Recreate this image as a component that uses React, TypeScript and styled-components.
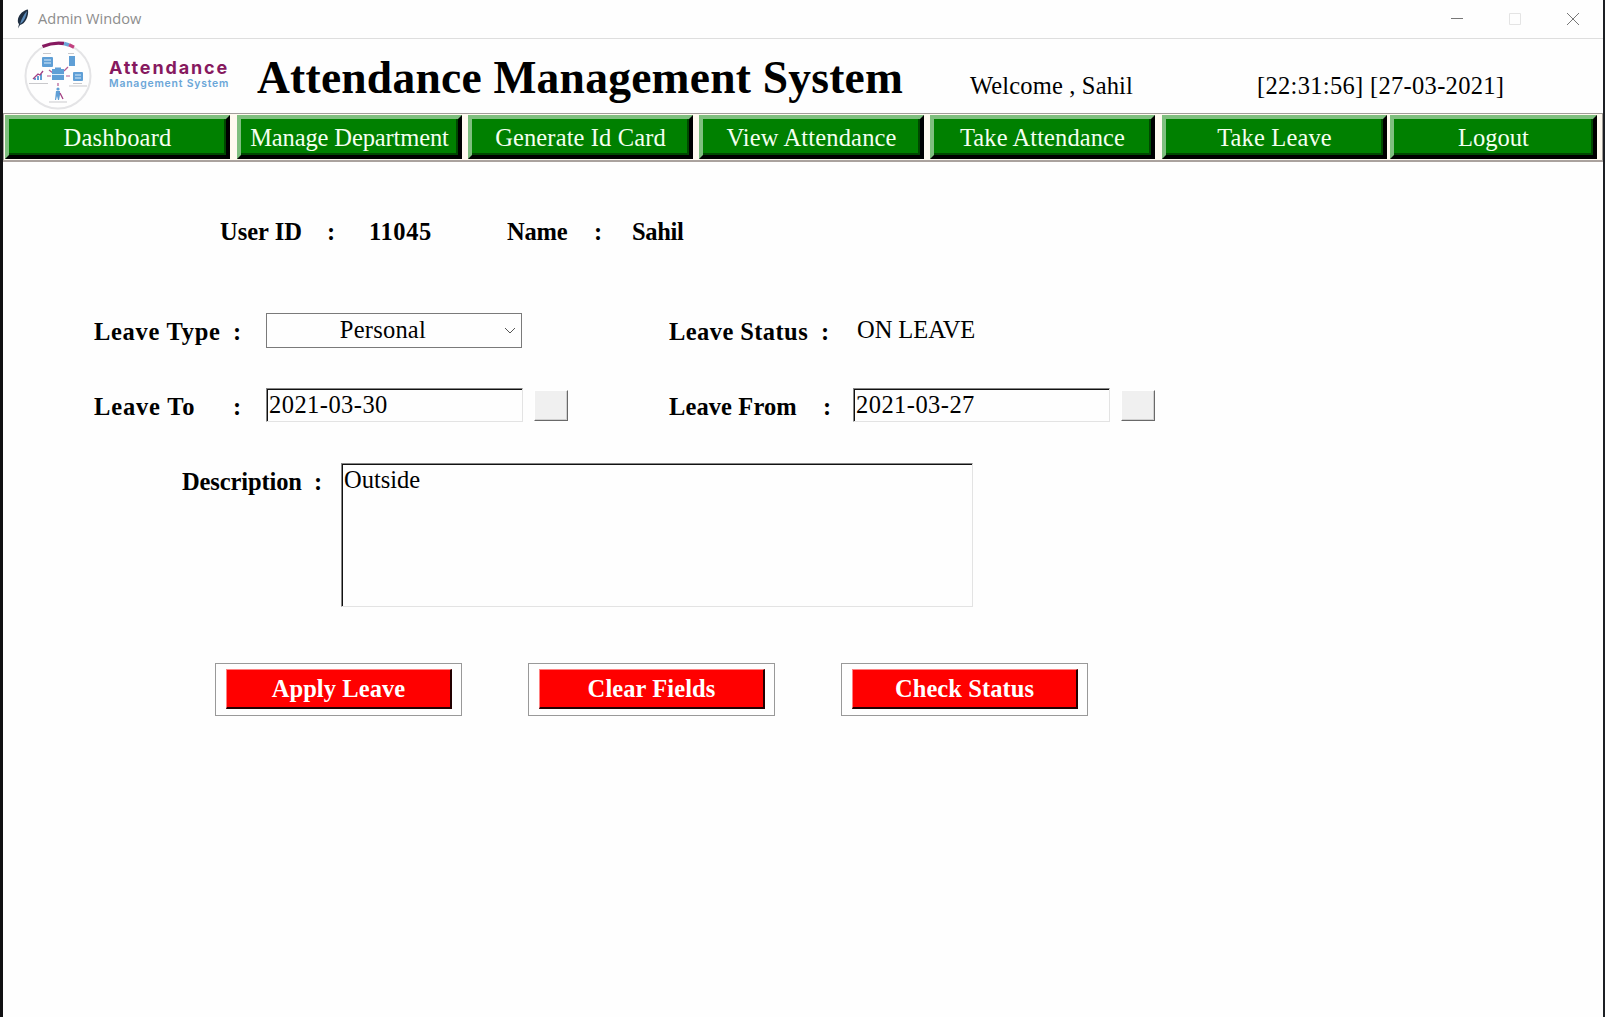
import React from "react";
import styled, { createGlobalStyle } from "styled-components";

const Global = createGlobalStyle`
  *{box-sizing:border-box}
  body{margin:0;background:#fefefe;overflow:hidden;font-family:"Liberation Serif","Times New Roman",serif;color:#000}
`;
const Window = styled.div`
  width:1605px;height:1017px;background:#fefefe;
  border-left:3px solid #101012;border-right:2px solid #1c1f24;
  display:flex;flex-direction:column;
`;
const TitleBar = styled.header`
  height:39px;flex:none;display:flex;align-items:center;padding-left:13px;
  border-bottom:1px solid #dedede;font:14.6px "Open Sans",sans-serif;color:#8d8d8d;
`;
const Caption = styled.div`margin:-2px 0 0 8px;flex:1;`;
const Controls = styled.div`display:flex;gap:44px;margin-right:23px;`;
const Header = styled.div`height:74px;flex:none;display:flex;align-items:flex-start;white-space:nowrap;`;
const Emblem = styled.svg`width:70px;height:70px;margin:2px 0 0 20px;`;
const Brand = styled.div`
  width:146px;margin:18px 0 0 16px;font-family:Inter,sans-serif;
`;
const BrandTop = styled.div`font-size:18px;line-height:22px;font-weight:700;letter-spacing:1.85px;color:#86195f;`;
const BrandSub = styled.div`font-size:10.4px;line-height:10px;font-weight:600;letter-spacing:.82px;color:#6ba6d8;`;
const Title = styled.h1`margin:12px 0 0 2px;width:713px;font-size:45.5px;line-height:54px;font-weight:700;letter-spacing:.24px;`;
const Info = styled.div<{ $w: number; $ls: number }>`
  width:${p => p.$w}px;margin-top:33px;font-size:24.5px;line-height:28px;letter-spacing:${p => p.$ls}px;
`;
const Nav = styled.nav`
  height:49px;flex:none;display:flex;padding:1px 0 0 1px;background:#fffaf0;
  border:1px solid #a09c98;border-bottom:2px solid #aaa29e;
`;
const NavButton = styled.button<{ $w: number; $gap: number; $ls: number }>`
  width:${p => p.$w}px;height:44px;flex:none;margin:0 ${p => p.$gap}px 0 0;padding:1px 0 0;
  font:24.5px/34px "Liberation Serif",serif;letter-spacing:${p => p.$ls}px;color:#f4fff0;background:#008000;
  border:4px solid;border-color:#7fbf7f #000 #000 #7fbf7f;box-shadow:inset -2px -2px 0 #004800;
`;
const Form = styled.main`font-size:24.5px;line-height:28px;white-space:pre;`;
const Row = styled.div<{ $top: number; $left: number }>`
  display:flex;align-items:flex-start;margin-top:${p => p.$top}px;padding-left:${p => p.$left}px;
`;
const Label = styled.div<{ $w: number; $ls?: number }>`
  width:${p => p.$w}px;flex:none;font-weight:700;padding-top:5px;letter-spacing:${p => p.$ls ?? 0.5}px;
`;
const Select = styled.div`
  width:256px;height:35px;border:1px solid #7a7a7a;display:flex;align-items:center;justify-content:flex-end;padding-right:5px;
`;
const SelectText = styled.span`margin:-2px 78px 0 0;letter-spacing:.22px;`;
const Entry = styled.div<{ $w?: number; $h?: number; $ls?: number }>`
  width:${p => p.$w ?? 257}px;height:${p => p.$h ?? 34}px;flex:none;padding-left:2px;line-height:32px;
  letter-spacing:${p => p.$ls ?? 0}px;
  border:1px solid;border-color:#858585 #e3e3e3 #e3e3e3 #858585;box-shadow:inset 1px 1px 0 #111;
`;
const DateButton = styled.button`
  width:34px;height:31px;margin:2px 0 0 11px;padding:0;flex:none;background:#f0f0f0;
  border:1px solid;border-color:#fff #696969 #696969 #fff;box-shadow:inset -1px -1px 0 #d0d0d0;
`;
const Status = styled.div`padding-top:3px;letter-spacing:-.05px;`;
const Actions = styled.div`display:flex;gap:66px;margin:56px 0 0 212px;`;
const ActionFrame = styled.div`width:247px;height:53px;border:1px solid #999;display:flex;padding:5px 0 0 10px;`;
const ActionButton = styled.button`
  width:226px;height:40px;padding:0;color:#fff;background:#f00;font:bold 24.5px/34px "Liberation Serif",serif;letter-spacing:.08px;
  border:solid;border-width:1px 2px 2px 1px;border-color:#ff8080 #200 #200 #ff8080;
`;

const nav: [string, number, number, number][] = [
  ["Dashboard", 225, 7, 0.2], ["Manage Department", 225, 6, -0.12], ["Generate Id Card", 225, 6, 0.12],
  ["View Attendance", 225, 6, 0.15], ["Take Attendance", 225, 7, 0.1], ["Take Leave", 225, 3, 0.15], ["Logout", 207, 0, 0],
];

const Feather = () => (
  <svg width="14" height="20" viewBox="0 0 14 20">
    <path d="M12 0.500C8 1 3 5 2 10c-.5 2.500 0 4 1 5l-1 4.500 2-3.500c5-1 9-8.500 8-15.500Z" fill="#1f2f42" />
    <path d="M11 2C8 5 6 9 4 15c4-2 6-7 7-13Z" fill="#5a8ab8" />
  </svg>
);

const Logo = () => (
  <Emblem viewBox="0 0 70 70">
    <circle cx="35" cy="35" r="32.500" fill="none" stroke="#e4e4e6" strokeWidth="2" />
    <path d="M19.500 5.500Q30 1 41 2.500" fill="none" stroke="#86195f" strokeWidth="3.400" />
    <path d="M41 2.500l5 1.500" stroke="#6ba6d8" strokeWidth="3.400" />
    <path d="M46 3.800l5 2.500" stroke="#c2417f" strokeWidth="3.400" />
    <g stroke="#b45a92" strokeWidth="1.200">
      <path d="M26 29l4 3M41 30l4-4M24 35h4M43 35h4M35 42v3" />
    </g>
    <g fill="#5f9fd6">
      <path d="M32 28v-1.500h6V28h3v11H29V28z" />
      <rect x="19" y="16" width="11" height="10" rx="1" />
      <rect x="46" y="15" width="6" height="10" />
      <rect x="50" y="31" width="10" height="9" rx="1" />
      <path d="M11 39v-2h2v2zM14 39v-4h2v4zM17 39v-6h2v6z" />
      <circle cx="35" cy="48" r="1.600" />
      <path d="M33 50h4v4l-1 5h-1l-1-4-1 4h-1z" />
    </g>
    <path d="M29 33.500h12M21 19h7M21 22h7M52 34h6M52 37h6" stroke="#d8ebfa" />
    <path d="M10 38l5-5 2 1 3-4M37 52l3 6" fill="none" stroke="#a44083" strokeWidth="1.300" />
    <path d="M20 12.500h8M45 12.500h6M6 42.500h19M50 42.500h9M46 45h18M26 61h18" stroke="#c9c9cc" />
  </Emblem>
);

function DateEntry({ value }: { value: string }) {
  return <><Entry $ls={0.45}>{value}</Entry><DateButton aria-label="Pick date" /></>;
}

export default function App() {
  return (
    <Window>
      <Global />
      <TitleBar>
        <Feather />
        <Caption>Admin Window</Caption>
        <Controls>
          <svg width="14" height="14"><path d="M1 6.500h12" stroke="#777" /></svg>
          <svg width="14" height="14"><path d="M1.500 1.500h11v11h-11z" fill="none" stroke="#e4e4e4" /></svg>
          <svg width="14" height="14"><path d="M1 1l12 12M13 1L1 13" stroke="#777" /></svg>
        </Controls>
      </TitleBar>
      <Header>
        <Logo />
        <Brand><BrandTop>Attendance</BrandTop><BrandSub>Management System</BrandSub></Brand>
        <Title>Attendance Management System</Title>
        <Info $w={287} $ls={0.16}>Welcome , Sahil</Info>
        <Info $w={260} $ls={0.31}>[22:31:56] [27-03-2021]</Info>
      </Header>
      <Nav>
        {nav.map(([t, w, g, ls]) => <NavButton key={t} $w={w} $gap={g} $ls={ls}>{t}</NavButton>)}
      </Nav>
      <Form>
        <Row $top={51} $left={217}>
          <Label $w={107} $ls={0}>User ID</Label><Label $w={42}>:</Label>
          <Label $w={138} $ls={0.6}>11045</Label><Label $w={87} $ls={-0.2}>Name</Label>
          <Label $w={38}>:</Label><Label $w={80} $ls={-0.35}>Sahil</Label>
        </Row>
        <Row $top={67} $left={91}>
          <Label $w={139} $ls={0.7}>Leave Type</Label><Label $w={33}>:</Label>
          <Select>
            <SelectText>Personal</SelectText>
            <svg width="12" height="8"><path d="M1 1l5 5 5-5" fill="none" stroke="#555" /></svg>
          </Select>
          <Row $top={0} $left={147}><Label $w={152} $ls={0.42}>Leave Status</Label><Label $w={36}>:</Label><Status>ON LEAVE</Status></Row>
        </Row>
        <Row $top={40} $left={91}>
          <Label $w={139} $ls={0.85}>Leave To</Label><Label $w={33}>:</Label>
          <DateEntry value="2021-03-30" />
          <Row $top={0} $left={101}><Label $w={154} $ls={0.1}>Leave From</Label><Label $w={30}>:</Label><DateEntry value="2021-03-27" /></Row>
        </Row>
        <Row $top={41} $left={179}>
          <Label $w={132} $ls={-0.12}>Description</Label><Label $w={27}>:</Label>
          <Entry $w={632} $h={144}>Outside</Entry>
        </Row>
        <Actions>
          {["Apply Leave", "Clear Fields", "Check Status"].map(t => (
            <ActionFrame key={t}><ActionButton>{t}</ActionButton></ActionFrame>
          ))}
        </Actions>
      </Form>
    </Window>
  );
}
